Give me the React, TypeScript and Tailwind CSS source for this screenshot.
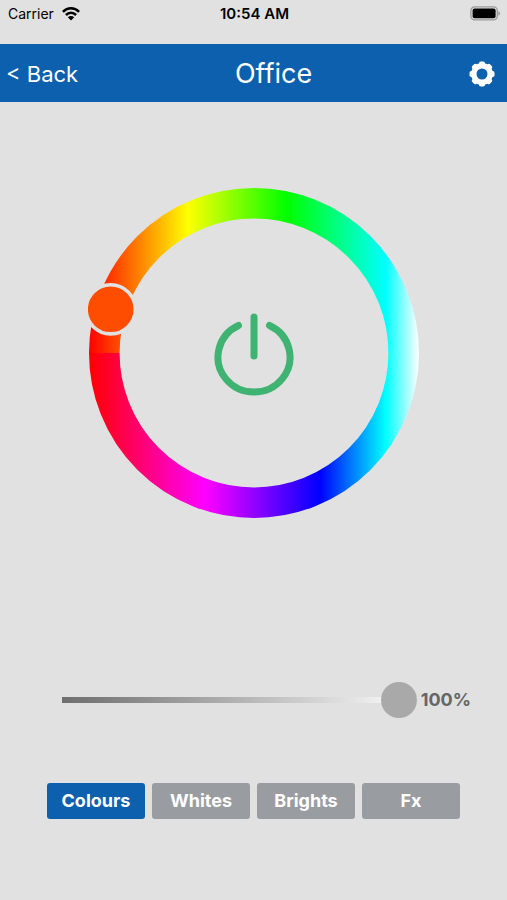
import { useState } from 'react'

const MODES = ['Colours', 'Whites', 'Brights', 'Fx']
const GEAR_TEETH = [0, 45, 90, 135, 180, 225, 270, 315]

function StatusBar() {
  return (
    <div className="flex h-11 items-start justify-between pl-2 pr-1.5 pt-1 text-black">
      <div className="flex h-5 flex-1 items-center gap-2 text-sm">
        <span>Carrier</span>
        <svg width="18" height="14" viewBox="0 0 18 14" aria-hidden="true">
          <g fill="none" stroke="currentColor" strokeWidth="2.5">
            <path d="M0.9 4.8C5.5 0.2 12.5 0.2 17.1 4.8" />
            <path d="M3.9 8C6.8 5.1 11.2 5.1 14.1 8" />
          </g>
          <path d="M9 13.4L5.8 10.2C7.6 8.6 10.4 8.6 12.2 10.2Z" fill="currentColor" />
        </svg>
      </div>
      <span className="h-5 text-[15px] leading-5 font-semibold">10:54 AM</span>
      <div className="flex h-5 flex-1 items-center justify-end">
        <svg width="31" height="18" viewBox="0 0 31 18" aria-hidden="true">
          <rect x="0.9" y="1.9" width="26.4" height="13" rx="3.8" fill="none" stroke="#9a9a9a" strokeWidth="1.3" />
          <rect x="2.6" y="3.6" width="23" height="9.6" rx="2" fill="#000" />
          <path d="M28.4 6.2C30.6 7 30.6 9.8 28.4 10.6Z" fill="#9a9a9a" />
        </svg>
      </div>
    </div>
  )
}

function GearIcon() {
  return (
    <svg width="26" height="26" viewBox="-13 -13 26 26" aria-hidden="true">
      <circle r="8.2" fill="none" stroke="#fff" strokeWidth="5.4" />
      {GEAR_TEETH.map((angle) => (
        <rect key={angle} x="-3" y="-12.5" width="6" height="5" rx="1.8" fill="#fff" transform={`rotate(${angle})`} />
      ))}
    </svg>
  )
}

function ColourWheel() {
  return (
    <svg viewBox="0 0 332 332" className="block w-full" aria-hidden="true">
      <defs>
        <linearGradient id="upper" gradientUnits="userSpaceOnUse" x1="1" y1="0" x2="331" y2="0">
          <stop offset="0" stopColor="#ff0000" />
          <stop offset="0.3" stopColor="#ffff00" />
          <stop offset="0.6" stopColor="#00ff00" />
          <stop offset="0.9" stopColor="#00ffff" />
          <stop offset="1" stopColor="#ffffff" />
        </linearGradient>
        <linearGradient id="lower" gradientUnits="userSpaceOnUse" x1="1" y1="0" x2="331" y2="0">
          <stop offset="0" stopColor="#ff0000" />
          <stop offset="0.35" stopColor="#ff00ff" />
          <stop offset="0.7" stopColor="#0000ff" />
          <stop offset="0.9" stopColor="#00ffff" />
          <stop offset="1" stopColor="#ffffff" />
        </linearGradient>
      </defs>
      <path d="M16.3 166A149.7 149.7 0 0 1 315.7 166" fill="none" stroke="url(#upper)" strokeWidth="30.6" />
      <path d="M16.3 166A149.7 149.7 0 0 0 315.7 166" fill="none" stroke="url(#lower)" strokeWidth="30.6" />
      <circle cx="22.7" cy="122.3" r="24.6" fill="#ff4d00" stroke="#e1e1e1" strokeWidth="3.6" />
    </svg>
  )
}

export default function App() {
  const [mode, setMode] = useState('Colours')
  const [power, setPower] = useState(true)
  const [brightness, setBrightness] = useState(100)

  return (
    <div className="flex min-h-screen flex-col bg-[#e1e1e1] font-['Inter',sans-serif]">
      <StatusBar />

      <header className="flex h-[58px] items-center justify-between bg-[#0d60ae] pl-1.5 pr-3 pt-0.5 text-white">
        <button type="button" className="text-[22px] leading-8">&lt; Back</button>
        <h1 className="text-[27px] leading-8">Office</h1>
        <button type="button" aria-label="Settings">
          <GearIcon />
        </button>
      </header>

      <main className="flex flex-col items-center pt-[85px]">
        <div className="grid w-[332px] max-w-full place-items-center">
          <div className="col-start-1 row-start-1 w-full">
            <ColourWheel />
          </div>
          <button
            type="button"
            aria-label="Power"
            aria-pressed={power}
            onClick={() => setPower(!power)}
            className="col-start-1 row-start-1 text-[#3fb371]"
          >
            <svg width="90" height="90" viewBox="-45 -49 90 90" fill="none" stroke="currentColor" strokeWidth="7" strokeLinecap="round" aria-hidden="true">
              <path d="M-15.5 -31.5A36 35 0 1 0 15.5 -31.5" />
              <path d="M0 -40V-1" />
            </svg>
          </button>
        </div>

        <div className="mt-[159px] flex w-full items-center gap-1 pl-[62px] pr-9">
          <input
            id="brightness"
            type="range"
            min={0}
            max={100}
            value={brightness}
            aria-label="Brightness"
            onChange={(e) => setBrightness(Number(e.target.value))}
            className="h-11 min-w-0 flex-1 appearance-none bg-transparent [&::-webkit-slider-runnable-track]:h-1.5 [&::-webkit-slider-runnable-track]:bg-linear-to-r [&::-webkit-slider-runnable-track]:from-[#6e6e6e] [&::-webkit-slider-runnable-track]:to-white [&::-webkit-slider-thumb]:-mt-[15px] [&::-webkit-slider-thumb]:size-9 [&::-webkit-slider-thumb]:appearance-none [&::-webkit-slider-thumb]:rounded-full [&::-webkit-slider-thumb]:bg-[#a9a9a9]"
          />
          <output htmlFor="brightness" className="text-lg font-bold text-[#666666]">
            {brightness}%
          </output>
        </div>

        <div className="mt-[61px] grid w-full grid-cols-4 gap-[7px] px-[47px]">
          {MODES.map((name) => (
            <button
              key={name}
              type="button"
              onClick={() => setMode(name)}
              className={`h-9 rounded-[3px] text-lg font-bold text-white ${mode === name ? 'bg-[#0d60ae]' : 'bg-[#999da1]'}`}
            >
              {name}
            </button>
          ))}
        </div>
      </main>
    </div>
  )
}
